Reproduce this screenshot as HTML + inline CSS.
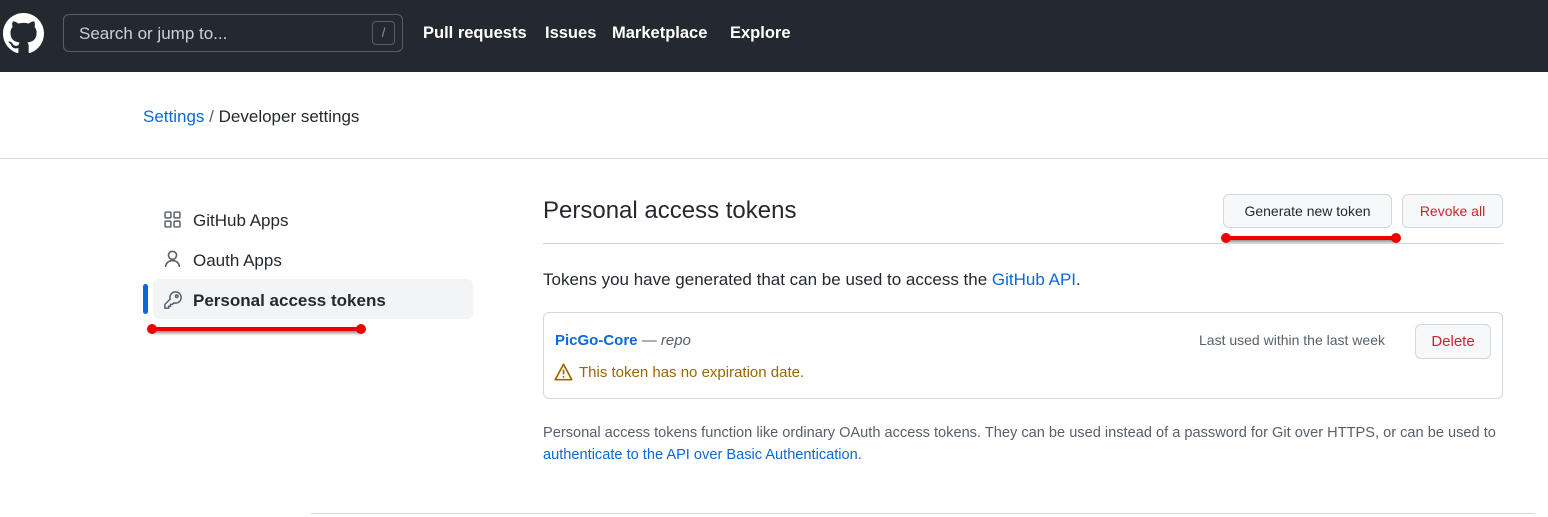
<!DOCTYPE html>
<html><head><meta charset="utf-8"><style>
*{margin:0;padding:0;box-sizing:border-box}
body{width:1548px;height:517px;overflow:hidden;background:#fff;font-family:"Liberation Sans",sans-serif;color:#24292f;position:relative}
.a{position:absolute;white-space:nowrap}
.hdr{position:absolute;left:0;top:0;width:1548px;height:72px;background:#24292f}
.nav{color:#fff;font-weight:bold;font-size:16.5px;top:24px}
.btn{position:absolute;border:1px solid #d0d7de;border-radius:6px;background:#f6f8fa;font-size:14px;text-align:center}
.red{position:absolute;height:4px;background:#e00;box-shadow:1px 2px 3px rgba(0,0,0,.5)}
.red:before,.red:after{content:"";position:absolute;top:-3px;width:10px;height:10px;border-radius:50%;background:#e00}
.red:before{left:-5px}.red:after{right:-5px}
</style></head><body>
<div class="hdr"></div>
<svg class="a" style="left:3px;top:13px" width="41" height="41" viewBox="0 0 16 16"><path fill="#fff" d="M8 0C3.58 0 0 3.580 0 8c0 3.54 2.29 6.53 5.47 7.59.4.07.55-.17.55-.38 0-.19-.01-.82-.01-1.49-2.010.37-2.53-.49-2.69-.94-.09-.23-.48-.94-.82-1.13-.28-.15-.68-.52-.01-.53.63-.01 1.080.58 1.23.82.72 1.21 1.870.87 2.330.66.07-.52.28-.87.51-1.07-1.78-.2-3.64-.89-3.64-3.95 0-.87.31-1.59.82-2.15-.08-.2-.36-1.02.08-2.12 0 0 .67-.21 2.2.82.64-.18 1.32-.27 2-.27.68 0 1.36.09 2 .27 1.53-1.04 2.2-.82 2.2-.82.44 1.1.16 1.92.08 2.12.51.56.82 1.27.82 2.15 0 3.07-1.87 3.75-3.65 3.95.29.25.54.73.54 1.48 0 1.07-.01 1.93-.01 2.2 0 .21.15.46.55.38A8.013 8.013 0 0016 8c0-4.42-3.58-8-8-8z"/></svg>
<div class="a" style="left:63px;top:14px;width:340px;height:38px;border:1px solid #57606a;border-radius:6px"></div>
<div class="a" style="left:79px;top:24px;font-size:17px;color:#c9d1d9">Search or jump to...</div>
<div class="a" style="left:372px;top:21px;width:23px;height:24px;border:1px solid #57606a;border-radius:4px;color:#8b949e;font-size:13px;text-align:center;line-height:22px">/</div>
<div class="a nav" style="left:423px">Pull requests</div>
<div class="a nav" style="left:545px">Issues</div>
<div class="a nav" style="left:612px">Marketplace</div>
<div class="a nav" style="left:730px">Explore</div>

<div class="a" style="left:143px;top:107px;font-size:17px"><span style="color:#0969da">Settings</span> <span style="color:#57606a">/</span> Developer settings</div>
<div class="a" style="left:0;top:158px;width:1548px;height:1px;background:#d0d7de"></div>

<svg class="a" style="left:164px;top:211px" width="17" height="17" viewBox="0 0 16 16" fill="none" stroke="#57606a" stroke-width="1.4"><rect x="1" y="1" width="5.5" height="5.5" rx="1"/><rect x="9.5" y="1" width="5.5" height="5.5" rx="1"/><rect x="1" y="9.5" width="5.5" height="5.5" rx="1"/><rect x="9.5" y="9.5" width="5.5" height="5.5" rx="1"/></svg>
<div class="a" style="left:193px;top:211px;font-size:17px">GitHub Apps</div>
<svg class="a" style="left:164px;top:250px" width="17" height="18" viewBox="0 0 16 17" fill="none" stroke="#57606a" stroke-width="1.5"><circle cx="8" cy="5" r="3.8"/><path d="M1.5 16c0-3.5 3-6 6.5-6s6.5 2.5 6.5 6"/></svg>
<div class="a" style="left:193px;top:251px;font-size:17px">Oauth Apps</div>
<div class="a" style="left:153px;top:279px;width:320px;height:40px;background:#f3f4f6;border-radius:6px"></div>
<div class="a" style="left:143px;top:284px;width:5px;height:30px;background:#0969da;border-radius:3px"></div>
<svg class="a" style="left:163px;top:290px" width="20" height="20" viewBox="0 0 16 16" fill="none" stroke="#57606a" stroke-width="1.2"><path d="M10 1.5a4.5 4.5 0 0 0-4.3 5.8L1.5 11.5v3h3v-1.5h1.5v-1.5h1.5l1.2-1.2A4.5 4.5 0 1 0 10 1.5z"/><circle cx="11" cy="5" r="1"/></svg>
<div class="a" style="left:193px;top:291px;font-size:17px;font-weight:bold">Personal access tokens</div>
<div class="red" style="left:152px;top:327px;width:209px"></div>

<div class="a" style="left:543px;top:197px;font-size:24px">Personal access tokens</div>
<div class="btn" style="left:1223px;top:194px;width:169px;height:34px;line-height:33px">Generate new token</div>
<div class="btn" style="left:1402px;top:194px;width:101px;height:34px;line-height:33px;color:#cf222e">Revoke all</div>
<div class="red" style="left:1226px;top:236px;width:170px"></div>
<div class="a" style="left:543px;top:243px;width:960px;height:1px;background:#d0d7de"></div>

<div class="a" style="left:543px;top:270px;font-size:17px">Tokens you have generated that can be used to access the <span style="color:#0969da">GitHub API</span>.</div>

<div class="a" style="left:543px;top:312px;width:960px;height:87px;border:1px solid #d0d7de;border-radius:6px"></div>
<div class="a" style="left:555px;top:332px;font-size:15px"><b style="color:#0969da">PicGo-Core</b> <span style="color:#57606a">— <i>repo</i></span></div>
<svg class="a" style="left:554px;top:363px" width="19" height="18" viewBox="0 0 16 15" fill="none" stroke="#9a6700" stroke-width="1.4"><path d="M8 1L1 14h14z" stroke-linejoin="round"/><path d="M8 5.5v4M8 11v1.3"/></svg>
<div class="a" style="left:579px;top:364px;font-size:15px;color:#9a6700">This token has no expiration date.</div>
<div class="a" style="left:1199px;top:332px;font-size:14px;color:#57606a">Last used within the last week</div>
<div class="btn" style="left:1415px;top:324px;width:76px;height:35px;line-height:34px;color:#cf222e;font-size:15px">Delete</div>

<div class="a" style="left:543px;top:422px;font-size:14.6px;color:#57606a;line-height:22px">Personal access tokens function like ordinary OAuth access tokens. They can be used instead of a password for Git over HTTPS, or can be used to<br><span style="color:#0969da">authenticate to the API over Basic Authentication</span>.</div>
<div class="a" style="left:311px;top:513px;width:1224px;height:1px;background:#d0d7de"></div>
</body></html>
